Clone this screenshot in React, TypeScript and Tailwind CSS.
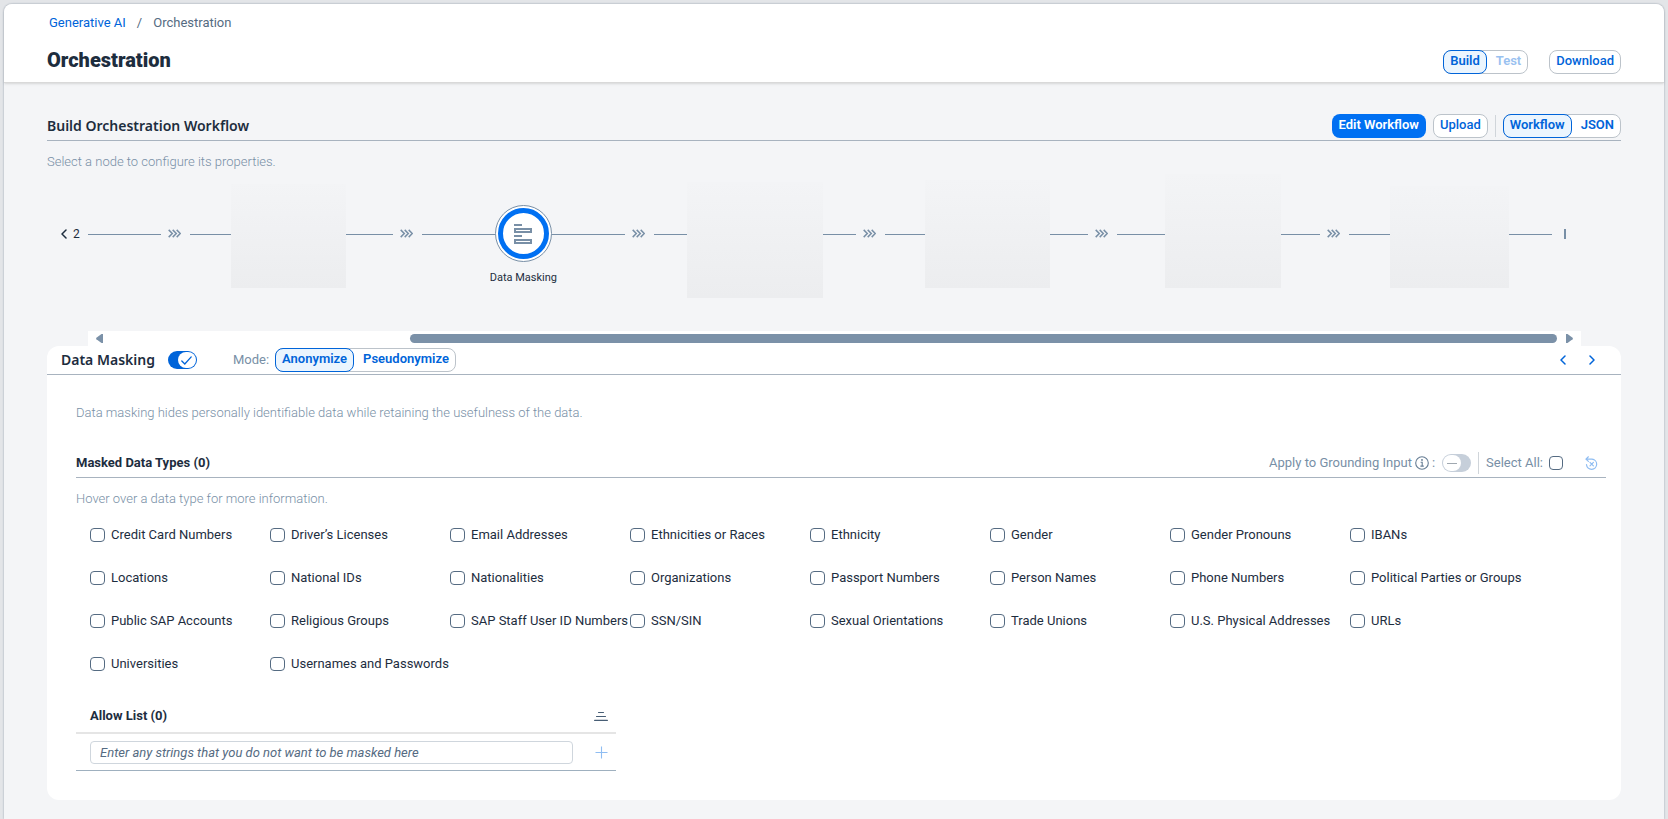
import { useState } from "react";
import type { ReactNode } from "react";

const DATA_TYPES = [
  "Credit Card Numbers", "Driver’s Licenses", "Email Addresses", "Ethnicities or Races",
  "Ethnicity", "Gender", "Gender Pronouns", "IBANs",
  "Locations", "National IDs", "Nationalities", "Organizations",
  "Passport Numbers", "Person Names", "Phone Numbers", "Political Parties or Groups",
  "Public SAP Accounts", "Religious Groups", "SAP Staff User ID Numbers", "SSN/SIN",
  "Sexual Orientations", "Trade Unions", "U.S. Physical Addresses", "URLs",
  "Universities", "Usernames and Passwords",
];

function Segmented({ label, options, value, onChange, disabled }: {
  label: string;
  options: string[];
  value: string;
  onChange: (v: string) => void;
  disabled?: string;
}) {
  return (
    <div role="group" aria-label={label} className="flex h-6 rounded-lg border border-[#bcc3ca] bg-white">
      {options.map((o) => (
        <button
          key={o}
          type="button"
          aria-pressed={o === value}
          disabled={o === disabled}
          onClick={() => onChange(o)}
          className={
            o === value
              ? "-m-px rounded-lg border border-[#0064d9] bg-[#ebf5fe] px-1.5 pb-0.5 font-semibold text-[#0064d9]"
              : "pr-1.5 pb-0.5 pl-[10px] font-semibold text-[#0064d9] disabled:text-[#99c1f0]"
          }
        >
          {o}
        </button>
      ))}
    </div>
  );
}

function OutlineButton({ children }: { children: ReactNode }) {
  return (
    <button type="button" className="h-6 rounded-lg border border-[#bcc3ca] bg-white px-1.5 pb-0.5 font-medium text-[#0064d9]">
      {children}
    </button>
  );
}

function Line({ className }: { className: string }) {
  return <div className={`mt-[60px] h-px bg-[#788fa6] ${className}`} />;
}

function Chevrons() {
  return (
    <svg className="mr-[9px] ml-[7px] mt-[55px] h-[9px] w-[13px] shrink-0" viewBox="0 0 13 9" fill="none" stroke="#788fa6" strokeWidth="1.5" aria-hidden="true">
      <path d="M0.7 0.9 4.3 4.5 0.7 8.1M4.7 0.9 8.3 4.5 4.7 8.1M8.7 0.9 12.3 4.5 8.7 8.1" />
    </svg>
  );
}

function Stage({ lead, children }: { lead: string; children: ReactNode }) {
  return (
    <div className="flex flex-1">
      <Line className={lead} />
      {children}
      <Line className="grow" />
    </div>
  );
}

function Placeholder({ className }: { className: string }) {
  return <div className={`shrink-0 bg-linear-to-b from-[#f3f4f6] to-[#ecedef] ${className}`} />;
}

function Angle({ dir, className }: { dir: "left" | "right"; className: string }) {
  return (
    <svg className={className} viewBox="0 0 6 10" fill="none" stroke="currentColor" strokeWidth="1.5" strokeLinecap="round" strokeLinejoin="round" aria-hidden="true">
      <path d={dir === "left" ? "M5 1 1 5 5 9" : "M1 1 5 5 1 9"} />
    </svg>
  );
}

function CheckBox({ id, className }: { id: string; className: string }) {
  return (
    <input
      id={id}
      type="checkbox"
      className={`shrink-0 appearance-none rounded border border-[#556b82] bg-white checked:bg-[#0064d9] ${className}`}
    />
  );
}

export default function App() {
  const [tab, setTab] = useState("Build");
  const [view, setView] = useState("Workflow");
  const [mode, setMode] = useState("Anonymize");
  const [masking, setMasking] = useState(true);

  return (
    <div className="min-h-screen bg-[#e3e5e8] px-1 pt-1 font-['Roboto','Noto_Sans',sans-serif] text-[13px] leading-5 text-[#1d2d3e]">
      <div className="flex min-h-[calc(100vh-4px)] flex-col rounded-t-lg bg-[#f4f5f7] shadow-[0_0_2px_#8d99a8]">
        <header className="relative rounded-t-lg border-b border-[#d9d9d9] bg-white px-[43px] pt-[9px] pb-2 shadow-sm">
          <nav aria-label="Breadcrumb" className="flex pl-0.5">
            <a href="#generative-ai" className="text-[#0064d9]">Generative AI</a>
            <span className="mx-[11px] text-[#556b82]">/</span>
            <span className="text-[#556b82]">Orchestration</span>
          </nav>
          <div className="mt-[13px] flex items-center">
            <h1 className="text-xl leading-7 font-black">Orchestration</h1>
            <div className="mt-1 ml-auto flex gap-[21px]">
              <Segmented label="Mode" options={["Build", "Test"]} value={tab} onChange={setTab} disabled="Test" />
              <OutlineButton>Download</OutlineButton>
            </div>
          </div>
        </header>

        <main className="px-[43px] pt-[27px]">
          <div className="flex h-[31px] items-center border-b border-[#a8b3bf]">
            <h2 className="mt-0.5 font-['Noto_Sans',sans-serif] text-sm font-semibold">Build Orchestration Workflow</h2>
            <div className="mt-0.5 ml-auto flex items-center">
              <button type="button" className="mr-[7px] h-6 rounded-lg bg-[#0070f2] px-[7px] pb-0.5 font-semibold text-white">Edit Workflow</button>
              <OutlineButton>Upload</OutlineButton>
              <span className="mx-[7px] h-[22px] w-px bg-[#d0d5da]" />
              <Segmented label="View" options={["Workflow", "JSON"]} value={view} onChange={setView} />
            </div>
          </div>
          <p className="mt-[11px] font-light text-[#788fa6]">Select a node to configure its properties.</p>

          <div className="mt-0.5 flex h-[157px]">
            <div className="mt-[50px] flex h-5 w-[41px] shrink-0 items-center gap-1.5 pl-[14px] text-xs">
              <Angle dir="left" className="h-[10px] w-1.5" />
              <span>2</span>
            </div>
            <Line className="w-[73px]" />
            <Chevrons />
            <Stage lead="w-[41px]"><Placeholder className="mt-[10px] h-[104px] w-[115px]" /></Stage>
            <Chevrons />
            <Stage lead="w-[73px]">
              <div className="relative mt-[31px] h-[57px] w-[57px] shrink-0">
                <button type="button" aria-label="Data Masking" className="flex h-full w-full items-center justify-center rounded-full border border-[#788fa6] bg-white p-0.5">
                  <span className="flex h-full w-full items-center justify-center rounded-full border-[5px] border-[#0070f2]">
                    <svg className="h-5 w-[18px]" viewBox="0 0 18 20" fill="none" stroke="#788fa6" strokeWidth="2" aria-hidden="true">
                      <path d="M0 1H8M0 12H8M1 5H17V8H1ZM1 16H17V19H1Z" />
                    </svg>
                  </span>
                </button>
                <span className="absolute top-full left-1/2 mt-1.5 -translate-x-1/2 text-[11px] whitespace-nowrap">Data Masking</span>
              </div>
            </Stage>
            <Chevrons />
            <Stage lead="w-[33px]"><Placeholder className="mt-2 h-[116px] w-[136px]" /></Stage>
            <Chevrons />
            <Stage lead="w-[40px]"><Placeholder className="mt-1.5 h-[108px] w-[125px]" /></Stage>
            <Chevrons />
            <Stage lead="w-[48px]"><Placeholder className="h-[114px] w-[116px]" /></Stage>
            <Chevrons />
            <Stage lead="w-[41px]"><Placeholder className="mt-3 h-[102px] w-[119px]" /></Stage>
            <div className="mt-[55px] mr-[55px] ml-3 h-[10px] w-0.5 shrink-0 bg-[#788fa6]" />
          </div>

          <div className="mr-10 ml-[41px] flex h-[15px] items-center bg-white px-2">
            <svg className="h-[9px] w-[7px]" viewBox="0 0 7 9" fill="#7b91a8" aria-hidden="true">
              <path d="M7 0H5.5L0.4 3.8Q-0.2 4.5 0.4 5.2L5.5 9H7Z" />
            </svg>
            <div className="mr-[9px] ml-[307px] h-[9px] grow rounded-full bg-[#7b91a8]" />
            <svg className="h-[9px] w-[7px]" viewBox="0 0 7 9" fill="#7b91a8" aria-hidden="true">
              <path d="M0 0H1.5L6.6 3.8Q7.2 4.5 6.6 5.2L1.5 9H0Z" />
            </svg>
          </div>

          <section className="rounded-xl bg-white pb-[29px]">
            <div className="flex h-[29px] items-center border-b border-[#a8b3bf] px-[14px]">
              <h2 className="font-['Noto_Sans',sans-serif] text-sm font-semibold">Data Masking</h2>
              <button
                type="button"
                role="switch"
                aria-checked={masking}
                aria-label="Data masking"
                onClick={() => setMasking(!masking)}
                className="ml-[13px] flex h-[18px] w-[29px] items-center justify-end rounded-full bg-[#0064d9] p-px"
              >
                <span className="flex h-4 w-[18px] items-center justify-center rounded-full bg-white">
                  <svg className="h-[9px] w-[11px]" viewBox="0 0 11 9" fill="none" stroke="#0064d9" strokeWidth="1.3" strokeLinecap="round" aria-hidden="true">
                    <path d="M0.8 5 3.8 8 10.2 0.9" />
                  </svg>
                </span>
              </button>
              <span className="mr-1.5 ml-9 text-[#788fa6]">Mode:</span>
              <Segmented label="Masking mode" options={["Anonymize", "Pseudonymize"]} value={mode} onChange={setMode} />
              <div className="ml-auto flex gap-[23px] pr-3 text-[#0064d9]">
                <button type="button" aria-label="Previous node"><Angle dir="left" className="h-[10px] w-1.5" /></button>
                <button type="button" aria-label="Next node"><Angle dir="right" className="h-[10px] w-1.5" /></button>
              </div>
            </div>

            <div className="pt-7 pr-[15px] pl-[29px]">
              <p className="font-light text-[#788fa6]">Data masking hides personally identifiable data while retaining the usefulness of the data.</p>

              <div className="mt-[26px] flex h-[29px] items-center border-b border-[#a8b3bf] text-[#788fa6]">
                <h3 className="font-bold text-[#1d2d3e]">Masked Data Types (0)</h3>
                <span className="ml-auto">Apply to Grounding Input</span>
                <svg className="ml-[3px] h-[14px] w-[14px]" viewBox="0 0 14 14" fill="none" stroke="#667d94" strokeWidth="1.1" aria-hidden="true">
                  <circle cx="7" cy="7" r="6.3" />
                  <path d="M5.6 6.2H7.2V10M5.4 10.1H8.8" />
                  <circle cx="7" cy="3.9" r="0.4" fill="#667d94" />
                </svg>
                <span className="ml-[3px]">:</span>
                <button type="button" role="switch" aria-checked={false} aria-label="Apply to grounding input" disabled className="ml-[7px] flex h-[18px] w-[29px] items-center rounded-full bg-[#c6cfda] p-px">
                  <span className="flex h-4 w-[18px] items-center justify-center rounded-full bg-white">
                    <span className="h-px w-[10px] bg-[#a0a8b0]" />
                  </span>
                </button>
                <span className="mx-[7px] h-[22px] w-px bg-[#d0d5da]" />
                <label htmlFor="select-all">Select All:</label>
                <CheckBox id="select-all" className="ml-1.5 h-[14px] w-[14px]" />
                <button type="button" aria-label="Reset" disabled className="mr-2 ml-[22px] text-[#8fbdf2]">
                  <svg className="h-[14px] w-[13px]" viewBox="0 0 13 14" fill="none" stroke="currentColor" strokeWidth="1.2" strokeLinecap="round" strokeLinejoin="round" aria-hidden="true">
                    <path d="M3.4 0.8 0.9 3.1 3.4 5.4M1.2 3.1H7A5.1 5.1 0 1 1 1.5 8.6M5 6.4 8.4 9.8M8.4 6.4 5 9.8" />
                  </svg>
                </button>
              </div>
              <p className="mt-[11px] font-light text-[#788fa6]">Hover over a data type for more information.</p>

              <ul className="mt-4 grid grid-cols-[repeat(8,180px)] gap-y-[23px] pl-[14px]">
                {DATA_TYPES.map((name, i) => (
                  <li key={name} className="flex items-center gap-1.5 whitespace-nowrap">
                    <CheckBox id={`type-${i}`} className="h-[14px] w-[15px]" />
                    <label htmlFor={`type-${i}`}>{name}</label>
                  </li>
                ))}
              </ul>

              <div className="mt-[29px] w-[540px]">
                <div className="flex h-[31px] items-center border-b-2 border-[#e5e5e5] pr-2 pb-1 pl-[14px]">
                  <h3 className="font-bold">Allow List (0)</h3>
                  <button type="button" aria-label="Sort" className="ml-auto text-[#475e75]">
                    <svg className="h-[10px] w-[14px]" viewBox="0 0 14 10" fill="none" stroke="currentColor" strokeWidth="1.1" strokeLinecap="round" aria-hidden="true">
                      <path d="M4.5 1.5H9.5M2.5 5.5H11.5M0.6 9.4H13.4" />
                    </svg>
                  </button>
                </div>
                <div className="flex h-[37px] items-center border-b border-[#9fb0bf] pr-2 pl-[14px]">
                  <input
                    type="text"
                    aria-label="Allow list entry"
                    placeholder="Enter any strings that you do not want to be masked here"
                    className="h-[23px] w-[483px] rounded border border-[#cfd6dd] bg-white px-[9px] placeholder:text-[#556b82] placeholder:italic"
                  />
                  <button type="button" aria-label="Add" disabled className="ml-auto text-[#8fbdf2]">
                    <svg className="h-[13px] w-[13px]" viewBox="0 0 13 13" fill="none" stroke="currentColor" strokeWidth="1.1" aria-hidden="true">
                      <path d="M6.5 0.5V12.5M0.5 6.5H12.5" />
                    </svg>
                  </button>
                </div>
              </div>
            </div>
          </section>
        </main>
      </div>
    </div>
  );
}
